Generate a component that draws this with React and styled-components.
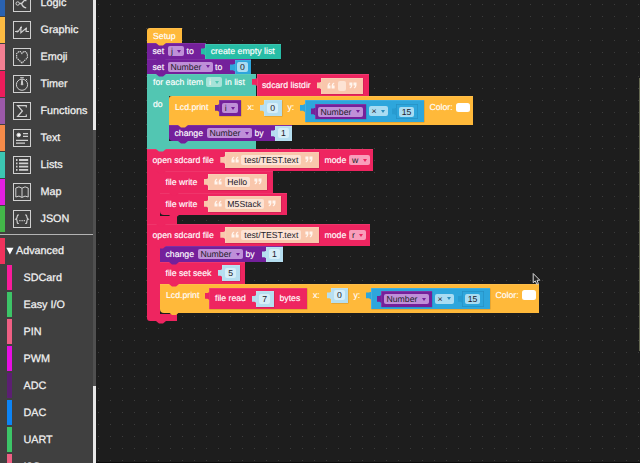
import React from 'react';
import styled, { createGlobalStyle, css } from 'styled-components';

const C = {
  red: '#ee2560',
  purple: '#74209b',
  orange: '#ffb93a',
  teal: '#52c6b2',
  list: '#27bda6',
  blue: '#2ea6dc',
  sky: '#b5def0',
  skin: '#f9c7ac',
};

const Global = createGlobalStyle`
  * { box-sizing: border-box; }
  body { margin: 0; overflow: hidden; background: #1e1e1e; }
`;

const Screen = styled.div`
  display: flex;
  width: 640px;
  height: 463px;
  overflow: hidden;
  font-family: 'Liberation Sans', Arial, sans-serif;
  text-rendering: geometricPrecision;
`;

/* ---------- Sidebar ---------- */

const Sidebar = styled.aside`
  display: flex;
  flex: none;
  width: 96px;
  height: 463px;
  background: #404040;
`;

const Menu = styled.nav`
  width: 93px;
  height: 463px;
  overflow: hidden;
`;

const MainList = styled.div`
  height: 235px;
  overflow: hidden;
  border-bottom: 1px solid #b4b4b4;
`;

const Scroll = styled.div`
  display: flex;
  flex-direction: column;
  margin-top: -10px;
`;

const Category = styled.div`
  display: flex;
  flex: none;
  align-items: center;
  height: 26px;
  margin-bottom: 1px;
  border-left: 5px solid ${(p) => p.$color};
  padding-left: 8px;
  gap: 9.5px;
`;

const CategoryName = styled.span`
  color: #f2f2f2;
  font-size: 10.8px;
  line-height: 14px;
  white-space: nowrap;
  -webkit-text-stroke: 0.25px #f2f2f2;
`;

const IconBox = styled.svg`
  flex: none;
  width: 18px;
  height: 18px;
  fill: none;
  stroke: #d0d0d0;
  stroke-width: 1;
`;

const AdvancedHead = styled(Category)`
  margin: 3px 0 1px;
  height: 26px;
  padding-left: 1px;
  gap: 2px;
`;

const Sub = styled.div`
  display: flex;
  align-items: center;
  height: 25px;
  margin: 0 0 2px 7px;
  border-left: 5px solid ${(p) => p.$color};
  padding-left: 11.5px;
`;

const ScrollTrack = styled.div`
  display: flex;
  flex-direction: column;
  justify-content: space-between;
  width: 3px;
  background: #505050;
`;

const Thumb = styled.div`
  height: ${(p) => p.$h}px;
  background: #e8e8e8;
`;

/* ---------- Workspace ---------- */

const Workspace = styled.main`
  position: relative;
  flex: 1;
  height: 463px;
  border-bottom: 1px solid #0c0c0c;
  background-color: #1d1d1d;
  background-image: radial-gradient(circle at 1.5px 1.5px, #3c3c3c 0, #363636 0.6px, transparent 0.9px);
  background-size: 12px 12px;
  background-position: 1px 3px;
`;

const Program = styled.div`
  position: absolute;
  left: 51px;
  top: 28px;
`;

const Simulator = styled.div`
  position: absolute;
  left: 543px;
  top: 78px;
  width: 1px;
  height: 273px;
  background: #666a52;
`;

const Cursor = styled.svg`
  position: absolute;
  left: 436px;
  top: 272px;
`;

const slot = css`
  flex: none;
  margin-left: ${(p) => p.$ml || 0}px;
  margin-top: ${(p) => p.$mt || 0}px;
`;

const Row = styled.div`
  position: relative;
  display: flex;
  align-items: flex-start;
  width: ${(p) => p.$w}px;
  height: ${(p) => p.$h}px;
  background: ${(p) => p.$c};
  border-radius: ${(p) => p.$r || '0'};
  box-shadow: ${(p) => (p.$foot ? 'none' : 'inset 0 0.6px 0 rgba(255, 255, 255, 0.15)')};
  &::after {
    content: '';
    position: absolute;
    z-index: 1;
    left: 9px;
    bottom: -2.5px;
    width: 10px;
    height: 3px;
    background: ${(p) => p.$c};
    clip-path: polygon(0 0, 100% 0, 100% 17%, 70% 100%, 30% 100%, 0 17%);
  }
`;

const Mouth = styled.div`
  display: flex;
`;

const Arm = styled.div`
  flex: none;
  width: ${(p) => p.$w}px;
  background: ${(p) => p.$c};
`;

const Body = styled.div`
  display: flex;
  flex-direction: column;
  padding-bottom: ${(p) => p.$pb || 0}px;
`;

const Value = styled.div`
  ${slot}
  position: relative;
  display: flex;
  align-items: flex-start;
  width: ${(p) => p.$w}px;
  height: ${(p) => p.$h}px;
  background: ${(p) => p.$c};
  box-shadow: inset 0.6px 0.6px 0 rgba(255, 255, 255, 0.2), 0.4px 0.4px 0 rgba(0, 0, 0, 0.25);
  &::before {
    content: '';
    position: absolute;
    left: -4.5px;
    top: 4px;
    width: 5px;
    height: 8px;
    background: ${(p) => p.$c};
    clip-path: polygon(0 12%, 60% 12%, 100% 0, 100% 100%, 60% 85%, 0 85%);
  }
`;

const Socket = styled(Value)`
  background: transparent;
  box-shadow: inset 0 0 0 0.7px #2791c4;
  &::before {
    background: #279bd0;
  }
`;

const Label = styled.span`
  ${slot}
  width: ${(p) => p.$w}px;
  height: 10px;
  color: #fff;
  font-size: ${(p) => p.$fs || 8.7}px;
  line-height: 10px;
  white-space: nowrap;
  -webkit-text-stroke: 0.15px #fff;
`;

const Field = styled.span`
  ${slot}
  display: flex;
  align-items: center;
  justify-content: ${(p) => (p.$center ? 'center' : 'space-between')};
  width: ${(p) => p.$w}px;
  height: 10px;
  padding: 0 ${(p) => (p.$center ? 0 : 3)}px;
  border-radius: 2px;
  background: ${(p) => p.$bg};
  color: ${(p) => p.$fg || '#22202a'};
  font-size: 8.7px;
  line-height: 10px;
  white-space: nowrap;
`;

const Arrow = styled.i`
  border: 2.5px solid transparent;
  border-top: 3px solid ${(p) => p.$c};
  border-bottom: 0;
`;

const Swatch = styled.span`
  ${slot}
  width: 14px;
  height: 9.5px;
  border-radius: 2.5px;
  background: #fff;
`;

const QuoteSvg = styled.svg`
  ${slot}
  width: 8px;
  height: 7px;
  fill: #fff5ee;
  transform: ${(p) => (p.$close ? 'none' : 'rotate(180deg)')};
`;

const Quote = (p) => (
  <QuoteSvg viewBox="0 0 8 7" {...p}>
    <path d="M.4.6h3v2.6Q3.4 5.6 1 6.4L.6 5.6Q1.9 5 1.9 3.5H.4zM4.5.6h3v2.6Q7.5 5.6 5.1 6.4L4.7 5.6Q6 5 6 3.5H4.5z" />
  </QuoteSvg>
);

const Dropdown = ({ text, c, ...rest }) => (
  <Field {...rest}>
    {text}
    <Arrow $c={c} />
  </Field>
);

const VarField = ({ text = 'Number', w = 45, bg = '#bf8fd8', ...rest }) => (
  <Dropdown text={text} c={C.purple} $w={w} $bg={bg} {...rest} />
);

const Num = ({ n, w = 17.5, h = 15.5, ml, mt, c = C.sky }) => (
  <Value $w={w} $h={h} $ml={ml} $mt={mt} $c={c}>
    <Field $center $w={11} $ml={(w - 11) / 2} $mt={(h - 10) / 2} $bg={c === C.sky ? '#d6eef8' : '#a9dcf2'}>
      {n}
    </Field>
  </Value>
);

const Str = ({ text, w, fieldW, ml, mt }) => (
  <Value $w={w} $h={16} $ml={ml} $mt={mt} $c={C.skin}>
    <Quote $ml={6} $mt={4} />
    <Field $center $w={fieldW} $ml={2.5} $mt={3} $bg="#fde3d4">
      {text}
    </Field>
    <Quote $close="1" $ml={3.5} $mt={4} />
  </Value>
);

const Product = ({ ml, mt }) => (
  <Value $w={119.5} $h={21.5} $ml={ml} $mt={mt} $c={C.blue}>
    <Value $w={50.5} $h={15.5} $ml={10.5} $mt={3.5} $c={C.purple}>
      <VarField $ml={2.5} $mt={3} />
    </Value>
    <Dropdown text="×" c="#2a8dbd" $w={19.5} $ml={3} $mt={6} $bg="#a9dcf2" />
    <Socket $w={21.5} $h={15.5} $ml={8} $mt={3.5}>
      <Field $center $w={15} $ml={3} $mt={3} $bg="#a9dcf2">
        15
      </Field>
    </Socket>
  </Value>
);

const ChangeNumber = ({ r }) => (
  <Row $w={123} $h={16} $c={C.purple} $r={r}>
    <Label $ml={5.5} $mt={3} $w={29.5}>change</Label>
    <VarField $ml={2.5} $mt={3} />
    <Label $ml={3} $mt={3} $w={10}>by</Label>
    <Num n="1" ml={10.5} mt={0.5} w={17} />
  </Row>
);

const OpenFile = ({ mode, w, fieldW }) => (
  <Row $w={w} $h={22} $c={C.red}>
    <Label $ml={5.5} $mt={6} $w={62}>open sdcard file</Label>
    <Str text="test/TEST.text" w={94} fieldW={60} ml={10.3} mt={3} />
    <Label $ml={5.7} $mt={6} $w={22}>mode</Label>
    <Dropdown text={mode} c={C.red} $w={fieldW} $ml={2.5} $mt={6} $bg="#f99dbb" />
  </Row>
);

const FileWrite = ({ text, w, strW, fieldW, r }) => (
  <Row $w={w} $h={22} $c={C.red} $r={r}>
    <Label $ml={5.5} $mt={6} $w={32}>file write</Label>
    <Str text={text} w={strW} fieldW={fieldW} ml={10.5} mt={3} />
  </Row>
);

/* ---------- Data ---------- */

const ICONS = {
  Logic: <><circle cx="4.7" cy="9.5" r="1.7" /><path d="M6.4 9.5h2.2l3.6-4M8.6 9.5q.8 3.6 4.6 4.4M10.6 5h2.2v2.2" strokeWidth="1.3" /></>,
  Graphic: <path d="M2 10.5h3.2l2.7-4v5.2l5.2-4.4v3.2H16M4.2 9.5v2M7 6.5h2M12.2 7.6h1.8" strokeWidth="1.2" />,
  Emoji: <path d="M9 15L3.6 9.8V5.7L5.7 3.6h1.7L9 5.5l1.6-1.9h1.7l2.1 2.1v4.1z" strokeDasharray="1.5 .7" strokeWidth="1.2" />,
  Timer: <><circle cx="9" cy="9.7" r="5.6" /><path d="M9 3.8v6M7.2 2.7h3.6M9 5.5l.9 4.2H8.2zM13 4l1.2 1.2" /></>,
  Functions: <path d="M13.3 5.5V3.6H4.6L9.4 9l-4.8 5.5h8.7v-2" strokeWidth="1.2" />,
  Text: <><circle cx="5.7" cy="6" r="1.8" fill="#fff" /><path d="M10 4.7h5M10 7.3h5M3 11.3h12M3 14.2h9" strokeWidth="1.2" /></>,
  Lists: <path d="M3 4h1.5M6 4h9.2M3 7.3h1.5M6 7.3h9.2M3 10.6h1.5M6 10.6h9.2M3 13.9h1.5M6 13.9h9.2" strokeWidth="1.8" />,
  Map: <path d="M9 5.2v9.2M9 5.2Q6 2.6 2.8 5v9Q6 12 9 14.4M9 5.2Q12 2.6 15.2 5v9Q12 12 9 14.4" />,
  JSON: <path d="M5.8 4.8Q4.2 4.8 4.2 6.4T2.8 9.2Q4.2 9.5 4.2 11.7T5.8 13.4M12.2 4.8q1.6 0 1.6 1.6t1.4 2.8q-1.4.3-1.4 2.5t-1.6 1.7M6.3 10.6h1.2M8.5 10.6h1.2M10.7 10.6h1.2" strokeWidth="1.2" />,
};

const CATEGORIES = [
  ['Logic', '#2a62b0'],
  ['Graphic', '#fdbb42'],
  ['Emoji', '#f37f92'],
  ['Timer', '#ec1c5b'],
  ['Functions', '#9b59a8'],
  ['Text', '#f58b49'],
  ['Lists', '#3cc6b2'],
  ['Map', '#e21fe0'],
  ['JSON', '#43b649'],
];

const ADVANCED = [
  ['SDCard', '#f81c9b'],
  ['Easy I/O', '#3cc467'],
  ['PIN', '#ee5f83'],
  ['PWM', '#e60fe2'],
  ['ADC', '#5c1f72'],
  ['DAC', '#0d84f5'],
  ['UART', '#3cc467'],
  ['I2C', '#ee5f83'],
];

export default function App() {
  return (
    <Screen>
      <Global />
      <Sidebar>
        <Menu>
          <MainList>
            <Scroll>
              {CATEGORIES.map(([name, color]) => (
                <Category key={name} $color={color}>
                  <IconBox viewBox="0 0 18 18">
                    <rect x=".5" y=".5" width="17" height="17" />
                    {ICONS[name]}
                  </IconBox>
                  <CategoryName>{name}</CategoryName>
                </Category>
              ))}
            </Scroll>
          </MainList>
          <AdvancedHead $color="#f0325c">
            <svg width="8" height="8" viewBox="0 0 8 8">
              <path d="M.3.8h7.2L3.9 7.6z" fill="#fff" />
            </svg>
            <CategoryName>Advanced</CategoryName>
          </AdvancedHead>
          {ADVANCED.map(([name, color]) => (
            <Sub key={name} $color={color}>
              <CategoryName>{name}</CategoryName>
            </Sub>
          ))}
        </Menu>
        <ScrollTrack>
          <Thumb $h={130} />
          <Thumb $h={77} />
        </ScrollTrack>
      </Sidebar>

      <Workspace>
        <Program>
          <Row $w={35} $h={15} $c={C.orange} $r="3px 0 0 0">
            <Label $ml={6} $mt={3} $w={24}>Setup</Label>
          </Row>

          <Row $w={59} $h={16} $c={C.purple}>
            <Label $ml={5.5} $mt={3} $w={13}>set</Label>
            <VarField text="j" w={15.5} $ml={2.5} $mt={3} />
            <Label $ml={3} $mt={3} $w={8}>to</Label>
            <Value $w={76} $h={15} $ml={10.5} $mt={0.5} $c={C.list}>
              <Label $ml={5.7} $mt={2.5} $w={64} $fs={8.8}>create empty list</Label>
            </Value>
          </Row>

          <Row $w={103.5} $h={15} $c={C.purple}>
            <Label $ml={5.5} $mt={2.5} $w={13}>set</Label>
            <VarField $ml={2} $mt={2.5} />
            <Label $ml={2.5} $mt={2.5} $w={8}>to</Label>
            <Num n="0" ml={11.5} mt={0.5} w={16} h={14} c={C.blue} />
          </Row>

          <Row $w={109} $h={22} $c={C.teal}>
            <Label $ml={6} $mt={3} $w={50.5}>for each item</Label>
            <Dropdown text="i" c="#52c6b2" $w={16} $ml={2.5} $mt={3} $bg="#a6e3d8" $fg="#fff" />
            <Label $ml={3} $mt={3} $w={21}>in list</Label>
            <Value $w={112.5} $h={22} $ml={10.5} $c={C.red}>
              <Label $ml={5.5} $mt={6} $w={50}>sdcard listdir</Label>
              <Str text="" w={42} fieldW={8} ml={9} mt={3.5} />
            </Value>
          </Row>
          <Mouth>
            <Arm $w={22} $c={C.teal}>
              <Label as="div" $ml={6} $mt={3} $w={12}>do</Label>
            </Arm>
            <Body>
              <Row $w={304} $h={29} $c={C.orange} $r="3px 0 0 0">
                <Label $ml={6} $mt={6} $w={33.5}>Lcd.print</Label>
                <Value $w={22} $h={15.5} $ml={10.5} $mt={4} $c={C.purple}>
                  <VarField text="i" w={16.5} $ml={2.7} $mt={3} />
                </Value>
                <Label $ml={6.5} $mt={6} $w={6.5}>x:</Label>
                <Num n="0" ml={10} mt={4} />
                <Label $ml={6} $mt={6} $w={7}>y:</Label>
                <Product ml={10} mt={4} />
                <Label $ml={5.5} $mt={6} $w={23}>Color:</Label>
                <Swatch $ml={3} $mt={6.5} />
              </Row>
              <ChangeNumber r="0 0 0 4px" />
            </Body>
          </Mouth>
          <Row $foot $w={109} $h={8} $c={C.teal} />

          <OpenFile mode="w" w={226} fieldW={21} />
          <Mouth>
            <Arm $w={13} $c={C.red} />
            <Body $pb={1}>
              <FileWrite text="Hello" w={113} strW={59} fieldW={25.5} />
              <FileWrite text="M5Stack" w={127} strW={73} fieldW={39.5} r="0 0 0 4px" />
            </Body>
          </Mouth>
          <Row $foot $w={30} $h={8} $c={C.red} />

          <OpenFile mode="r" w={223} fieldW={17.5} />
          <Mouth>
            <Arm $w={13} $c={C.red} />
            <Body $pb={1}>
              <ChangeNumber r="3px 0 0 0" />
              <Row $w={85} $h={22} $c={C.red}>
                <Label $ml={5.5} $mt={5.5} $w={46}>file set seek</Label>
                <Num n="5" ml={10.5} mt={3} />
              </Row>
              <Row $w={379} $h={28.5} $c={C.orange} $r="0 0 0 4px">
                <Label $ml={6} $mt={5.5} $w={33.5}>Lcd.print</Label>
                <Value $w={98} $h={21} $ml={9.5} $mt={4} $c={C.red}>
                  <Label $ml={6} $mt={5} $w={31}>file read</Label>
                  <Num n="7" ml={10} mt={3} />
                  <Label $ml={6} $mt={5} $w={21}>bytes</Label>
                </Value>
                <Label $ml={6} $mt={5.5} $w={6.5}>x:</Label>
                <Num n="0" ml={11.5} mt={3.5} w={17} />
                <Label $ml={5.5} $mt={5.5} $w={7}>y:</Label>
                <Product ml={10} mt={3.5} />
                <Label $ml={5.5} $mt={5.5} $w={23}>Color:</Label>
                <Swatch $ml={3} $mt={6} />
              </Row>
            </Body>
          </Mouth>
          <Row $foot $w={30} $h={7.5} $c={C.red} $r="0 0 0 3px" />
        </Program>

        <Simulator />
        <Cursor width="10" height="14" viewBox="0 0 10 14">
          <path d="M1.2 1.5v9.2l2.1-1.8 1.4 3.4 1.7-.7L5 8.3l2.8-.1z" fill="#222" stroke="#d8d8d8" strokeWidth="1" />
        </Cursor>
      </Workspace>
    </Screen>
  );
}
